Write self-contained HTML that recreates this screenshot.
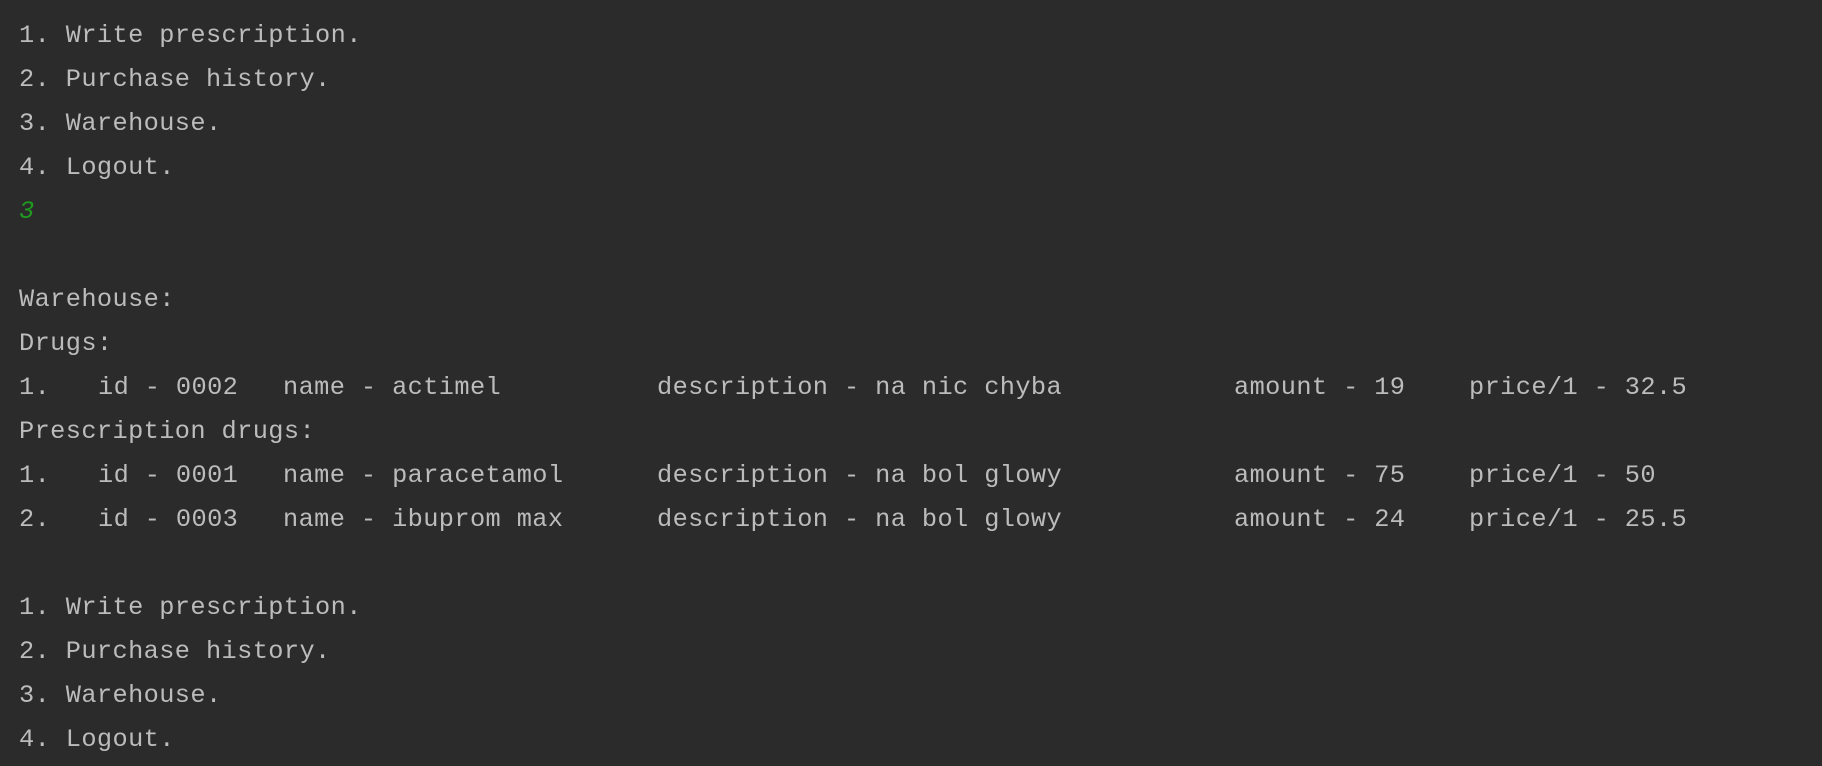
<!DOCTYPE html>
<html><head><meta charset="utf-8"><style>
html,body{margin:0;padding:0;background:#2b2b2b;width:1822px;height:766px;overflow:hidden}
.c{position:absolute;left:19px;top:14px;font-family:"Liberation Mono",monospace;font-size:25.3px;letter-spacing:0.4px;color:#bcbcbc}
.l{position:relative;height:44px;line-height:44px;white-space:pre}
.l span{position:absolute;top:0}
.g{color:#1f9a1f;font-style:italic}
</style></head><body><div class="c">
<div class="l">1. Write prescription.</div>
<div class="l">2. Purchase history.</div>
<div class="l">3. Warehouse.</div>
<div class="l">4. Logout.</div>
<div class="l g">3</div>
<div class="l"></div>
<div class="l">Warehouse:</div>
<div class="l">Drugs:</div>
<div class="l"><span style="left:0">1.</span><span style="left:79px">id - 0002</span><span style="left:264px">name - actimel</span><span style="left:638px">description - na nic chyba</span><span style="left:1215px">amount - 19</span><span style="left:1450px">price/1 - 32.5</span></div>
<div class="l">Prescription drugs:</div>
<div class="l"><span style="left:0">1.</span><span style="left:79px">id - 0001</span><span style="left:264px">name - paracetamol</span><span style="left:638px">description - na bol glowy</span><span style="left:1215px">amount - 75</span><span style="left:1450px">price/1 - 50</span></div>
<div class="l"><span style="left:0">2.</span><span style="left:79px">id - 0003</span><span style="left:264px">name - ibuprom max</span><span style="left:638px">description - na bol glowy</span><span style="left:1215px">amount - 24</span><span style="left:1450px">price/1 - 25.5</span></div>
<div class="l"></div>
<div class="l">1. Write prescription.</div>
<div class="l">2. Purchase history.</div>
<div class="l">3. Warehouse.</div>
<div class="l">4. Logout.</div>
</div></body></html>
